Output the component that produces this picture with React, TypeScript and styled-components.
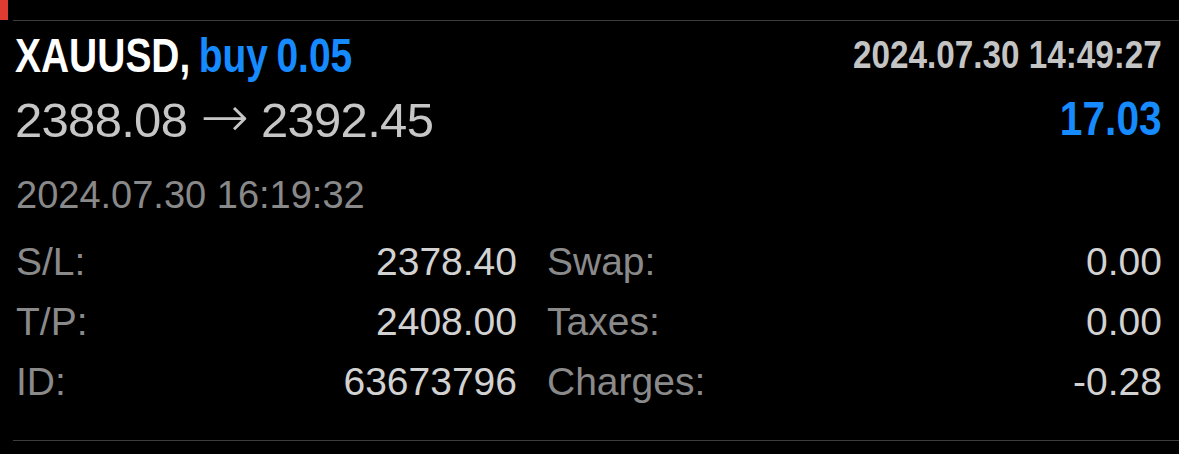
import styled, { createGlobalStyle } from 'styled-components';

const GlobalStyle = createGlobalStyle`
  html, body {
    margin: 0;
    background: #000;
  }
  body {
    font-family: "Liberation Sans", Arial, sans-serif;
    -webkit-font-smoothing: antialiased;
  }
`;

const details = [
  { label: 'S/L:', value: '2378.40', label2: 'Swap:', value2: '0.00' },
  { label: 'T/P:', value: '2408.00', label2: 'Taxes:', value2: '0.00' },
  { label: 'ID:', value: '63673796', label2: 'Charges:', value2: '-0.28' },
];

function App() {
  return (
    <Screen>
      <GlobalStyle />
      <PrevRow>
        <StatusBar />
      </PrevRow>
      <Divider />
      <Trade>
        <HeadRow>
          <Title>
            XAUUSD, <Side>buy 0.05</Side>
          </Title>
          <OpenTime>2024.07.30 14:49:27</OpenTime>
        </HeadRow>
        <PriceRow>
          <Prices>
            2388.08 <Arrow>→</Arrow> 2392.45
          </Prices>
          <Profit>17.03</Profit>
        </PriceRow>
        <CloseTime>2024.07.30 16:19:32</CloseTime>
        <Details>
          {details.map(d => (
            <DetailRow key={d.label}>
              <Pair>
                <Label>{d.label}</Label>
                <Value>{d.value}</Value>
              </Pair>
              <Pair>
                <Label>{d.label2}</Label>
                <Value>{d.value2}</Value>
              </Pair>
            </DetailRow>
          ))}
        </Details>
      </Trade>
      <Divider />
    </Screen>
  );
}

const Screen = styled.div`
  background: #000;
  width: 1179px;
  height: 454px;
  overflow: hidden;
`;

const PrevRow = styled.div`
  height: 20px;
  display: flex;
`;

const StatusBar = styled.div`
  width: 8px;
  background: #e03b30;
`;

const Divider = styled.div`
  height: 1px;
  margin-left: 13px;
  background: #3d3d3d;
`;

const Trade = styled.div`
  padding: 8px 17px 28px 16px;
`;

const HeadRow = styled.div`
  display: flex;
  justify-content: space-between;
  align-items: center;
  height: 52px;
`;

/* condensed bold face: Liberation Sans Bold squeezed horizontally */
const Condensed = styled.div<{ $squeeze: number; $origin: 'left' | 'right' }>`
  display: inline-block;
  font-weight: 700;
  white-space: nowrap;
  transform: scaleX(${p => p.$squeeze});
  transform-origin: ${p => p.$origin} center;
`;

const Title = styled(Condensed).attrs({ $squeeze: 0.795, $origin: 'left' as const })`
  font-size: 49px;
  line-height: 52px;
  word-spacing: -3px;
  color: #fff;
  margin-left: -1px;
`;

const Side = styled.span`
  color: #168bff;
`;

const OpenTime = styled(Condensed).attrs({ $squeeze: 0.875, $origin: 'right' as const })`
  font-size: 38px;
  line-height: 52px;
  color: #c4c4c4;
`;

const PriceRow = styled.div`
  display: flex;
  justify-content: space-between;
  align-items: center;
  height: 52px;
  margin-top: 11px;
`;

const Prices = styled.div`
  font-size: 49px;
  line-height: 52px;
  letter-spacing: -0.7px;
  color: #c6c6c6;
  margin-left: -1px;
`;

const Arrow = styled.span`
  font-family: "DejaVu Sans", sans-serif;
  font-weight: 200;
  font-size: 58px;
  line-height: 52px;
`;

const Profit = styled(Condensed).attrs({ $squeeze: 0.83, $origin: 'right' as const })`
  font-size: 49px;
  line-height: 52px;
  color: #168bff;
`;

const CloseTime = styled.div`
  margin-top: 29px;
  font-size: 38px;
  line-height: 44px;
  color: #898989;
`;

const Details = styled.div`
  margin-top: 15px;
  display: flex;
  flex-direction: column;
`;

const DetailRow = styled.div`
  display: grid;
  grid-template-columns: 501px 1fr;
  column-gap: 30px;
  height: 60px;
  align-items: center;
`;

const Pair = styled.div`
  display: flex;
  justify-content: space-between;
  font-size: 39px;
  line-height: 60px;
`;

const Label = styled.span`
  color: #8a8a8a;
`;

const Value = styled.span`
  color: #d2d2d2;
`;

export default App;
